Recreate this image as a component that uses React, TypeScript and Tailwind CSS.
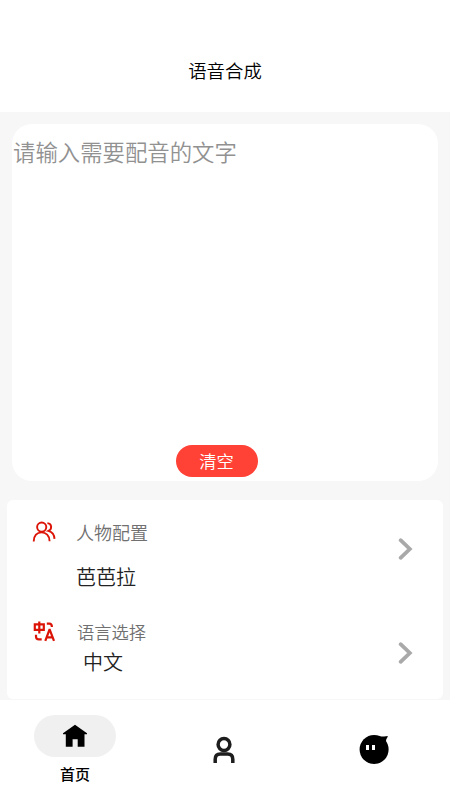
import React from "react";

function PeopleIcon() {
  return (
    <svg className="h-6 w-6 shrink-0" viewBox="0 0 24 24" fill="none" stroke="#dc1408" strokeWidth="1.9">
      <circle cx="9.7" cy="7.1" r="4.6" />
      <path d="M1.7 21.4c0-5.8 3.4-9 7.8-9s8.1 3.2 8.1 8.8" />
      <path d="M15.4 3.1c4.7.6 4.9 6 1 7.8 3.4.9 5.9 3.4 6.1 8" />
    </svg>
  );
}

function TranslateIcon() {
  return (
    <svg className="h-6 w-6 shrink-0" viewBox="0 0 24 24" fill="none" stroke="#dc1408" strokeWidth="2.2">
      <path d="M2.8 4.4h9v5.4h-9zM7.3 1.4v12" />
      <path d="M14.8 3.6h2.6c1.8 0 2.5.9 2.5 3.5M4 14.8v1.6c0 2 1 3 3 3h2.7" />
      <path d="M13.3 20.8l4.1-11h.4l4.2 11M14.7 17.3h6.2" />
    </svg>
  );
}

function Chevron() {
  return (
    <svg className="h-6 w-4 shrink-0" viewBox="0 0 16 24" fill="none" stroke="#a9a9a9" strokeWidth="3.8" strokeLinecap="round">
      <path d="M3.6 3.2l9.2 8.8-9.2 8.8" />
    </svg>
  );
}

function HomeIcon() {
  return (
    <svg className="h-6 w-6" viewBox="0 0 24 24" fill="#000">
      <path d="M12 .7l12 8.6v.9h-2.5v12.6h-6.8v-7.6H9.6v7.6H2.8V10.2H0v-.9z" />
    </svg>
  );
}

function UserIcon() {
  return (
    <svg className="h-7 w-6" viewBox="0 0 24 28" fill="none" stroke="#1d1d1d" strokeWidth="3.5">
      <circle cx="12" cy="8.5" r="5.9" />
      <path d="M3.2 27v-3.7c0-3.6 1.8-5.2 5.2-5.2h7.2c3.4 0 5.2 1.6 5.2 5.2V27" />
    </svg>
  );
}

function MascotIcon() {
  return (
    <svg className="h-[30px] w-[30px]" viewBox="0 0 30 30" fill="#000">
      <circle cx="15.1" cy="15.5" r="14.5" />
      <path d="M18.5 2.2c3.1.8 6.2.2 10.3-.2-.1 1.8-1.8 2.6-1.8 5l1 4z" />
      <path fill="#fff" d="M7 11h3v5H7zM13 11h3v5h-3z" />
    </svg>
  );
}

export default function App() {
  return (
    <div className="flex h-[800px] w-[450px] flex-col overflow-hidden bg-[#f7f7f7] font-['Noto_Sans_CJK_SC',sans-serif] text-black">
      <header className="flex h-28 shrink-0 items-center justify-center bg-white pt-7 text-[18.4px] leading-none">
        <h1 className="font-[350]">语音合成</h1>
      </header>

      <main className="h-[588px] shrink-0 pt-3 font-[350]">
        <section className="mx-3 flex h-[357px] flex-col items-center justify-between rounded-[20px] bg-white pt-[15px] pb-1">
          <p className="w-full pl-px text-[22.4px] leading-6 text-[#919191]">请输入需要配音的文字</p>
          <button className="mr-[17px] flex h-8 w-[82px] items-center justify-center rounded-full bg-[#ff4136] text-[17.3px] leading-none text-white">
            清空
          </button>
        </section>

        <section className="mt-[19px] mr-[7px] ml-[7px] flex h-[199px] flex-col rounded-md bg-white pr-[30px] pl-[25px]">
          <div className="flex h-[101px] items-start justify-between pt-5">
            <PeopleIcon />
            <div className="ml-5 flex-1">
              <p className="text-[18px] leading-6 text-[#707070]">人物配置</p>
              <p className="mt-[21px] text-[20px] leading-6 text-[#222]">芭芭拉</p>
            </div>
            <div className="pt-[17px]"><Chevron /></div>
          </div>
          <div className="flex items-start justify-between pt-[19px]">
            <TranslateIcon />
            <div className="ml-[21px] flex-1">
              <p className="text-[17.3px] leading-6 text-[#707070]">语言选择</p>
              <p className="mt-1.5 pl-1.5 text-[20px] leading-6 text-[#222]">中文</p>
            </div>
            <div className="pt-[21px]"><Chevron /></div>
          </div>
        </section>
      </main>

      <nav className="grid h-[100px] shrink-0 grid-cols-3 bg-white">
        <button className="flex flex-col items-center pt-[15px]">
          <span className="flex h-[42px] w-[82px] items-center justify-center rounded-full bg-[#f0f0f0]">
            <HomeIcon />
          </span>
          <span className="mt-[9px] text-[15px] leading-4 font-medium">首页</span>
        </button>
        <button className="flex items-start justify-center pt-9 pr-0.5" aria-label="User">
          <UserIcon />
        </button>
        <button className="flex items-start justify-center pt-[34px] pr-0.5" aria-label="Mascot">
          <MascotIcon />
        </button>
      </nav>
    </div>
  );
}
